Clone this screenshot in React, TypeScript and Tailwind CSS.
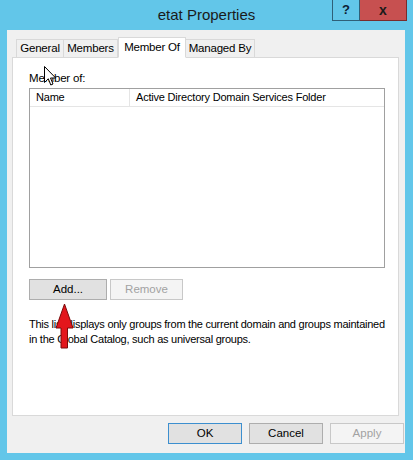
import React from 'react';

const font = { fontFamily: '"Liberation Sans", Arial, sans-serif' };

const Tab: React.FC<{ label: string; active?: boolean; w: string }> = ({ label, active, w }) =>
  active ? (
    <div className={`${w} h-[21px] -mb-px relative z-10 bg-white border border-[#d9d9d9] border-b-white flex items-center justify-center text-[11.5px] tracking-[-0.2px] text-black whitespace-nowrap`}>
      {label}
    </div>
  ) : (
    <div className={`${w} h-[19px] mt-[2px] bg-[#f0f0f0] border border-[#d9d9d9] -ml-px first:ml-0 flex items-center justify-center text-[11.5px] tracking-[-0.2px] text-black whitespace-nowrap`}>
      {label}
    </div>
  );

const Btn: React.FC<{ label: string; kind?: 'normal' | 'default' | 'disabled'; w?: string }> = ({ label, kind = 'normal', w = 'w-[75px]' }) => {
  const cls =
    kind === 'default'
      ? 'border-[#3c8fcf] bg-[#e1e1e1] text-black'
      : kind === 'disabled'
      ? 'border-[#c8c8c8] bg-[#f4f4f4] text-[#a2a2a2]'
      : 'border-[#adadad] bg-[#e1e1e1] text-black';
  return (
    <div className={`${w} h-[21px] border ${cls} flex items-center justify-center text-[11.5px]`}>{label}</div>
  );
};

export default function App() {
  return (
    <div style={font} className="w-[413px] h-[460px] bg-[#62c6e9] flex flex-col relative overflow-hidden">
      {/* title bar */}
      <div className="h-[30px] flex relative">
        <div className="flex-1 flex items-center justify-center text-[15px] text-[#1a1a1a] pt-[1px]">etat Properties</div>
        <div className="absolute right-[6px] top-0 flex">
          <div className="w-[28px] h-[21px] border border-[#2f5f78] border-t-0 flex items-center justify-center text-[13px] font-bold text-[#0d1d33]">?</div>
          <div className="w-[47px] h-[21px] bg-[#c75050] border border-[#7a2b2b] border-t-0 border-l-0 flex items-center justify-center text-[14px] font-bold text-[#1a1a1a]">x</div>
        </div>
      </div>

      {/* client */}
      <div className="ml-[7px] w-[398px] h-[423px] bg-[#f0f0f0] pt-[7px] pl-[5px] flex flex-col">
        <div className="flex pl-[4px] h-[20px]">
          <Tab label="General" w="w-[48px]" />
          <Tab label="Members" w="w-[55px]" />
          <Tab label="Member Of" active w="w-[68px]" />
          <Tab label="Managed By" w="w-[70px]" />
        </div>

        <div className="w-[387px] h-[359px] bg-white border border-[#d9d9d9] pt-[13px] px-[16px]">
          <div className="text-[11.5px] tracking-[-0.2px] text-black leading-[14px]">Member of:</div>
          <div className="mt-[3px] w-[356px] h-[180px] border border-[#a0a0a0] bg-white">
            <div className="flex h-[18px] border-b border-[#e5e5e5] text-[11px] tracking-[-0.2px] text-black whitespace-nowrap">
              <div className="w-[100px] border-r border-[#e5e5e5] pl-[6px] flex items-center">Name</div>
              <div className="flex-1 pl-[6px] flex items-center">Active Directory Domain Services Folder</div>
            </div>
          </div>
          <div className="mt-[11px] flex gap-[3px]">
            <Btn label="Add..." w="w-[78px]" />
            <Btn label="Remove" kind="disabled" w="w-[73px]" />
          </div>
          <p className="mt-[17px] text-[11px] tracking-[-0.25px] leading-[15px] text-black whitespace-nowrap">
            This list displays only groups from the current domain and groups maintained
            <br />
            in the Global Catalog, such as universal groups.
          </p>
        </div>

        <div className="mt-[7px] flex gap-[7px] pl-[156px]">
          <Btn label="OK" kind="default" w="w-[74px]" />
          <Btn label="Cancel" w="w-[74px]" />
          <Btn label="Apply" kind="disabled" w="w-[74px]" />
        </div>
      </div>

      {/* mouse cursor */}
      <svg className="absolute left-[44px] top-[66px]" width="13" height="21" viewBox="0 0 13 21">
        <path d="M0.5 0.5 L0.5 16.5 L4.3 12.8 L6.8 19 L9 18 L6.5 12 L11.7 12 Z" fill="#fff" stroke="#000" strokeWidth="1" />
      </svg>

      {/* red arrow */}
      <svg className="absolute left-[55px] top-[303px]" width="19" height="46" viewBox="0 0 19 46">
        <path d="M9.5 1 L18 25 L12.5 25 L12.5 45 L6 45 L6 25 L1 25 Z" fill="#e3161c" stroke="#7a0a0a" strokeWidth="1" />
      </svg>
    </div>
  );
}
